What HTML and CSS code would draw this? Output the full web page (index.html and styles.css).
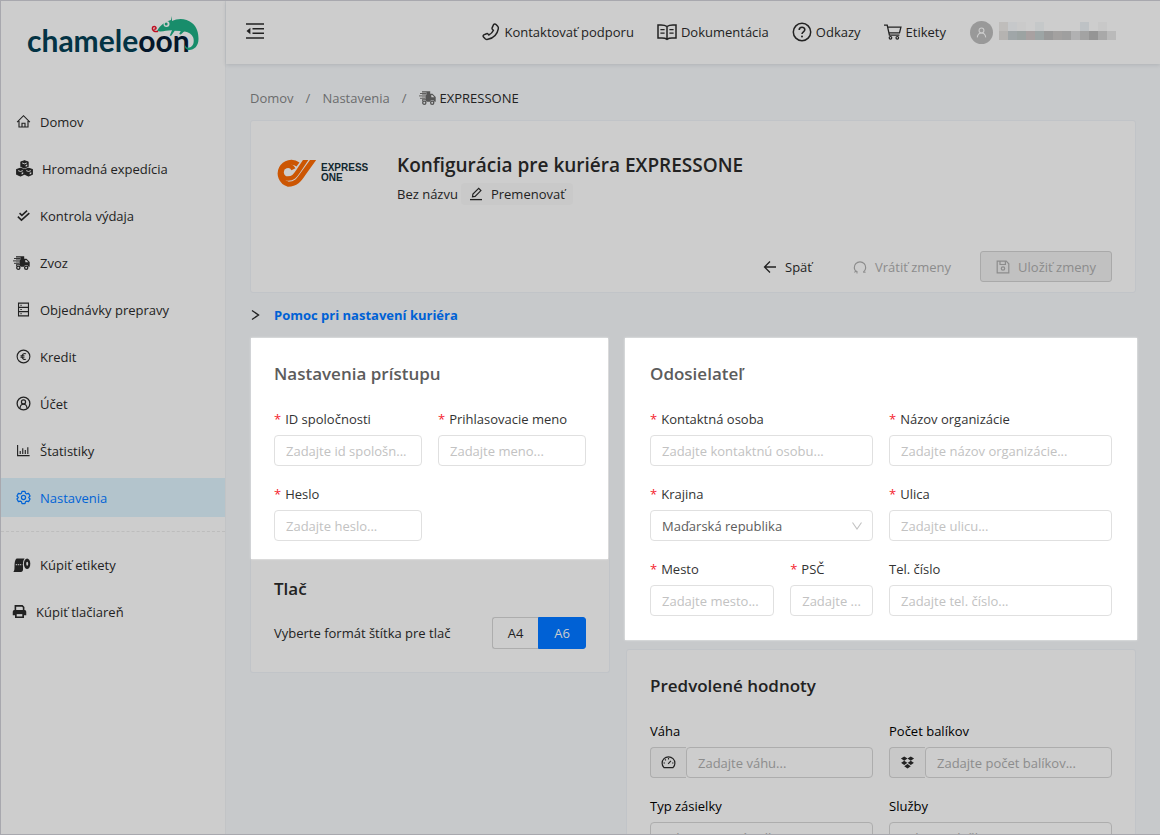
FILE: index.html
```html
<!DOCTYPE html>
<html lang="sk">
<head>
<meta charset="utf-8">
<title>Konfigurácia pre kuriéra EXPRESSONE</title>
<link rel="stylesheet" href="styles.css">
</head>
<body>
<svg class="defs" aria-hidden="true">
  <symbol id="home" viewBox="0 0 16 16"><path d="M1.2 8.6 8 1.8l6.8 6.8M3.2 7.5v6.3h9.6V7.5M6.4 13.8V9.9h3.2v3.9" fill="none" stroke="currentColor" stroke-width="1.2"/></symbol>
  <symbol id="boxes" viewBox="0 0 16 16"><path d="M8 .6l3.4 1.3v4.2L8 7.6 4.600 6.100V1.900zM4.200 7.700l3.500 1.300v4.500l-3.500 1.500L.6 13.500V9zM11.800 7.700 15.400 9v4.500L11.800 15l-3.500-1.500V9z" fill="currentColor" stroke="currentColor" stroke-linejoin="round"/><path d="M5.800 2.800 8 3.600l2.200-.8M2 10l2.200.8L6.400 10M9.600 10l2.200.8L14 10" fill="none" stroke="#cdcdcd" stroke-width=".9"/><path d="M9.100 4.800l1.500-.6v1.400l-1.500.7zM5.300 12.100l1.500-.6v1.400l-1.500.7zM12.900 12.100l1.500-.6v1.400l-1.500.7z" fill="#cdcdcd"/></symbol>
  <symbol id="checks" viewBox="0 0 16 16"><path d="M3.800 5.400l2.500 2.400L11.800 2.800M2 9.200 5.800 13l8.400-7.600" fill="none" stroke="currentColor" stroke-width="1.700"/></symbol>
  <symbol id="truck" viewBox="0 0 18 16"><path d="M3 1.200h8.200v2.600h2.300l3.200 3.300v4.700h-1.200a2.300 2.300 0 0 0-4.500 0H7.600a2.300 2.300 0 0 0-4.500 0H3z" fill="currentColor"/><path d="M1 3.500h6.600M0 5.900h6.600M1 8.300h5.600" stroke="#cdcdcd" stroke-width="1.900"/><path d="M1 3.500h6.600M0 5.900h6.600M1 8.300h5.600" stroke="currentColor" stroke-width=".9"/><path d="M12.300 4.900h.9l2.200 2.300h-3.100z" fill="#cdcdcd"/><circle cx="5.300" cy="12.700" r="1.600" fill="none" stroke="currentColor" stroke-width="1.300"/><circle cx="13.200" cy="12.700" r="1.600" fill="none" stroke="currentColor" stroke-width="1.300"/></symbol>
  <symbol id="orders" viewBox="0 0 16 16"><path d="M2.700 1.200h10.600v13.600H2.700zM2.700 5.700h10.600M2.700 10.300h10.600" fill="none" stroke="currentColor" stroke-width="1.200"/><path d="M4.600 3.500h1.600M4.600 8h1.600M4.600 12.500h1.600" stroke="currentColor"/></symbol>
  <symbol id="euro" viewBox="0 0 16 16"><circle cx="8" cy="8" r="6.800" fill="none" stroke="currentColor" stroke-width="1.200"/><path d="M10.700 5.200a3 3 0 0 0-4.300 2.800 3 3 0 0 0 4.300 2.800M4.800 7.200H9M4.800 8.900H9" fill="none" stroke="currentColor" stroke-width="1.100"/></symbol>
  <symbol id="user" viewBox="0 0 16 16"><circle cx="8" cy="8" r="6.800" fill="none" stroke="currentColor" stroke-width="1.400"/><circle cx="8" cy="6.300" r="2.200" fill="none" stroke="currentColor" stroke-width="1.300"/><path d="M4.300 12.800c.2-2.400 1.800-4 3.700-4s3.500 1.600 3.700 4" fill="none" stroke="currentColor" stroke-width="1.300"/></symbol>
  <symbol id="chart" viewBox="0 0 16 16"><path d="M1.700 2v11.400h12.800" fill="none" stroke="currentColor" stroke-width="1.200"/><path d="M4.500 8.500v3.200M7.200 5.500v6.200M9.900 7.500v4.200M12.600 4.500v7.200" stroke="currentColor" stroke-width="1.200"/></symbol>
  <symbol id="gear" viewBox="0 0 16 16"><path d="M6.400 1.500h3.200l.5 1.900 1.400.8 1.900-.6L15 6.400 13.600 7.800v.4L15 9.600l-1.600 2.800-1.900-.6-1.400.8-.5 1.900H6.400l-.5-1.900-1.400-.8-1.900.6L1 9.600 2.400 8.200v-.4L1 6.400l1.600-2.800 1.900.6 1.400-.8z" fill="none" stroke="currentColor" stroke-width="1.300" stroke-linejoin="round"/><circle cx="8" cy="8" r="2.200" fill="none" stroke="currentColor" stroke-width="1.300"/></symbol>
  <symbol id="roll" viewBox="0 0 18 16"><path d="M3.600 1.500h8c-1.300 1.300-1.600 3.500-1.600 6v5.300c0 1.200-.8 2.200-2 2.200H.3c1.200-1.200 1.200-3 1.200-5.200C1.500 6 1.800 2.800 3.600 1.500z" fill="currentColor"/><ellipse cx="14.100" cy="6.800" rx="3.200" ry="5.300" fill="currentColor"/><ellipse cx="14.200" cy="6.800" rx="1" ry="2" fill="#cdcdcd"/><path d="M2.800 7.700h6.400" stroke="#cdcdcd" stroke-width="1.200" stroke-dasharray="1 1"/></symbol>
  <symbol id="printer" viewBox="0 0 16 16"><path d="M3.600 6.500V2h7.300l1.500 1.500v3" fill="none" stroke="currentColor" stroke-width="1.700"/><path d="M2.500 6.500h11a1.700 1.700 0 0 1 1.700 1.700V12h-2.400v3H3.200v-3H.8V8.200a1.700 1.700 0 0 1 1.700-1.700z" fill="currentColor"/><path d="M5 10.800h6v2.500H5z" fill="#cdcdcd"/></symbol>
  <symbol id="fold" viewBox="0 0 18 16"><path d="M0 1h18M6.500 5.700H18M6.500 10.300H18M0 15h18" stroke="currentColor" stroke-width="1.500"/><path d="M4.400 4.800v6.400L.5 8z" fill="currentColor"/></symbol>
  <symbol id="phone" viewBox="0 0 18 18"><path d="M11.600 1.500c.7-.7 1.700-.7 2.400 0l1.700 1.700c.8.800.8 1.700.6 2.600-1 5.300-5.200 9.400-10.500 10.500-.9.200-1.800.1-2.600-.6l-1.700-1.800c-.6-.6-.5-1.500.3-2l2.700-1.200c.6-.3 1.200-.1 1.600.4l.7.9c2-1 3.800-2.800 4.700-4.700l-1-.8c-.5-.4-.6-1-.4-1.600z" fill="none" stroke="currentColor" stroke-width="1.500" stroke-linejoin="round"/></symbol>
  <symbol id="book" viewBox="0 0 20 18"><path d="M10 3.500C8.500 2.400 6.500 2 4 2H1v13h4c2 0 3.800.4 5 1.300 1.200-.9 3-1.300 5-1.300h4V2h-3c-2.500 0-4.500.4-6 1.500zM10 3.500V16" fill="none" stroke="currentColor" stroke-width="1.500"/><path d="M3.400 6.600h4.200M3.400 10.200h4.200M12.400 6.600h4.200M12.400 10.200h4.200" stroke="currentColor" stroke-width="1.200"/></symbol>
  <symbol id="help" viewBox="0 0 20 20"><circle cx="10" cy="10" r="8.700" fill="none" stroke="currentColor" stroke-width="1.500"/><path d="M7.200 8c0-3.600 5.600-3.600 5.600-.3 0 2-2.800 2.200-2.800 4.300" fill="none" stroke="currentColor" stroke-width="1.600"/><circle cx="10" cy="14.500" r="1" fill="currentColor"/></symbol>
  <symbol id="cart" viewBox="0 0 18 16"><path d="M0 1.200h3.200l2.200 10h10M3.600 3.200h13.300l-1.400 5.600H5" fill="none" stroke="currentColor" stroke-width="1.300"/><circle cx="6.500" cy="13.800" r="1.300" fill="none" stroke="currentColor" stroke-width="1.200"/><circle cx="13.300" cy="13.800" r="1.300" fill="none" stroke="currentColor" stroke-width="1.200"/></symbol>
  <symbol id="edit" viewBox="0 0 14 14"><path d="M3.500 9.800l.4-2.700L9.700 1.400l2.200 2.200-5.800 5.800z" fill="none" stroke="currentColor" stroke-width="1.200"/><path d="M1 12.600h12" stroke="currentColor" stroke-width="1.300"/></symbol>
  <symbol id="back" viewBox="0 0 14 14"><path d="M13 7H1.500M7 1.500 1.500 7 7 12.500" fill="none" stroke="currentColor" stroke-width="1.300"/></symbol>
  <symbol id="undo" viewBox="0 0 14 14"><path d="M3.500 12A5.700 5.700 0 1 1 10.500 12" fill="none" stroke="currentColor" stroke-width="1.200"/><path d="M1.200 12.200 4 11v2.500M12.600 12.200h-2.400" fill="none" stroke="currentColor"/></symbol>
  <symbol id="save" viewBox="0 0 14 14"><path d="M1.200 1.200h9l2.600 2.600v9H1.200zM4 1.500v3h5.400v-3" fill="none" stroke="currentColor" stroke-width="1.200"/><circle cx="7" cy="8.500" r="1.700" fill="none" stroke="currentColor" stroke-width="1.200"/></symbol>
  <symbol id="down" viewBox="0 0 12 12"><path d="M1.500 2.500 6 9l4.500-6.500" fill="none" stroke="currentColor" stroke-width="1.100"/></symbol>
  <symbol id="right" viewBox="0 0 10 12"><path d="M1.500 1.500 8 6l-6.500 4.500" fill="none" stroke="currentColor" stroke-width="1.400"/></symbol>
  <symbol id="gauge" viewBox="0 0 16 16"><path d="M3.200 13.500a6.800 6.800 0 1 1 9.600 0z" fill="none" stroke="currentColor" stroke-width="1.300" stroke-linejoin="round"/><path d="M7.600 9.500l3-3.200M8 3.200v1.500M4.200 4.700l1 1M2.700 8.500h1.500M11.800 8.500h1.500" stroke="currentColor" stroke-width="1.200"/></symbol>
  <symbol id="drop" viewBox="0 0 16 16"><path d="M4.500 1.500 8 3.800 4.500 6.100 1 3.800zM11.500 1.500 15 3.800l-3.500 2.300L8 3.800zM4.500 6.100 8 8.400l-3.500 2.300L1 8.400zM11.500 6.100 15 8.400l-3.500 2.300L8 8.400zM8 9.600l3.500 2.300L8 14.500l-3.500-2.600z" fill="currentColor"/></symbol>
</svg>

<div class="app">
  <aside class="sidebar">
    <a class="brand" href="#">
      <span class="brand-text">chamele<span class="brand-dark">oon</span></span>
      <svg class="brand-lizard" viewBox="0 0 48 38" aria-hidden="true">
        <path d="M6 16C9 10 14 7 20 5l1-4v5c6-3 14-3 20 2 5 4 6.500 10 6.500 16C47.500 31 43 35 38.500 35c-3.500 0-5.300-2.600-4.500-5 .6 2 2.400 3 4.500 2.500 4-1 5-6 3.700-10-1.300-3-4.500-5.500-8.500-6-2 .2-2.500 2.500-4 3l-1.500-.5 1.500-3-6-.3-3.500 5h-1.500l2.300-5.400C16 15 11 17.500 6 16z" fill="#188d6b"/>
        <circle cx="15.500" cy="9" r="3" fill="#cdcdcd"/><circle cx="15.200" cy="9" r="1.500" fill="#188d6b"/>
        <path d="M7 16.200c-3 1.200-6-.7-5.600-3.200.3-2 3.700-2 3.600.2 0 1-1.200 1.200-1.700.5" fill="none" stroke="#c00d20" stroke-width="1.500"/>
      </svg>
    </a>
    <nav class="menu">
      <a href="#"><svg><use href="#home"/></svg>Domov</a>
      <a href="#" class="large"><svg><use href="#boxes"/></svg>Hromadná expedícia</a>
      <a href="#"><svg><use href="#checks"/></svg>Kontrola výdaja</a>
      <a href="#" class="wide"><svg><use href="#truck"/></svg>Zvoz</a>
      <a href="#"><svg><use href="#orders"/></svg>Objednávky prepravy</a>
      <a href="#"><svg><use href="#euro"/></svg>Kredit</a>
      <a href="#"><svg><use href="#user"/></svg>Účet</a>
      <a href="#"><svg><use href="#chart"/></svg>Štatistiky</a>
      <a href="#" class="active"><svg><use href="#gear"/></svg>Nastavenia</a>
    </nav>
    <nav class="menu menu-extra">
      <a href="#" class="wide"><svg><use href="#roll"/></svg>Kúpiť etikety</a>
      <a href="#" class="near"><svg><use href="#printer"/></svg>Kúpiť tlačiareň</a>
    </nav>
  </aside>

  <div class="page">
    <header class="topbar">
      <button class="fold" type="button" aria-label="Menu"><svg><use href="#fold"/></svg></button>
      <nav class="toplinks">
        <a href="#"><svg class="i18"><use href="#phone"/></svg>Kontaktovať podporu</a>
        <a href="#"><svg class="i20"><use href="#book"/></svg>Dokumentácia</a>
        <a href="#"><svg class="i20"><use href="#help"/></svg>Odkazy</a>
        <a href="#"><svg class="i18"><use href="#cart"/></svg>Etikety</a>
      </nav>
      <div class="account">
        <span class="avatar"><svg viewBox="0 0 16 16"><circle cx="8" cy="5.500" r="3" fill="none" stroke="currentColor" stroke-width="1.300"/><path d="M2.800 14c.4-3.600 2.400-5.500 5.200-5.500s4.800 1.900 5.200 5.500" fill="none" stroke="currentColor" stroke-width="1.300"/></svg></span>
        <svg class="mosaic" viewBox="0 0 117 18" aria-hidden="true">
          <path d="M0 0h9v9H0z" fill="#bfbdbb"/><path d="M9 0h9v9H9z" fill="#c6c8ca"/><path d="M18 0h9v9h-9z" fill="#cacaca"/><path d="M36 0h9v9h-9z" fill="#c5c8c9"/><path d="M81 0h9v9h-9z" fill="#bec2c5"/><path d="M99 0h9v9h-9z" fill="#c8c8c8"/>
          <path d="M0 9h9v9H0z" fill="#b5b3b1"/><path d="M9 9h9v9H9z" fill="#a0a6a8"/><path d="M18 9h9v9h-9z" fill="#9ca3a2"/><path d="M27 9h9v9h-9z" fill="#a8a1a1"/><path d="M36 9h9v9h-9z" fill="#9da5a5"/><path d="M45 9h9v9h-9z" fill="#999"/><path d="M54 9h9v9h-9z" fill="#a3a1a0"/><path d="M63 9h9v9h-9z" fill="#9f9f9f"/><path d="M72 9h9v9h-9z" fill="#b1b1b2"/><path d="M81 9h9v9h-9z" fill="#a3a3a3"/><path d="M90 9h9v9h-9z" fill="#959595"/><path d="M99 9h9v9h-9z" fill="#a9a9a9"/><path d="M108 9h9v9h-9z" fill="#bababa"/>
        </svg>
      </div>
    </header>

    <main class="content">
      <nav class="crumbs">
        <a href="#">Domov</a><span>/</span><a href="#">Nastavenia</a><span>/</span>
        <b><svg><use href="#truck"/></svg>EXPRESSONE</b>
      </nav>

      <section class="card hero">
        <div class="hero-top">
          <svg class="courier" viewBox="0 0 94 30" role="img" aria-label="Express One">
            <path d="M24 6.500A11.200 11.200 0 1 0 14 26.200C22 26.200 25 22 29 16L40.500 0" fill="none" stroke="#cc5603" stroke-width="5"/>
            <path d="M19.500 11.300A6.300 6.300 0 1 0 14 20.500c5 0 7-2.500 10-7L33 0" fill="none" stroke="#cc5603" stroke-width="4.500"/>
            <path d="M26 0h20v2H26z" fill="#cdcdcd"/>
            <text x="47" y="13" class="courier-text">EXPRESS</text>
            <text x="47" y="23" class="courier-text">ONE</text>
          </svg>
          <div class="hero-title">
            <h1>Konfigurácia pre kuriéra EXPRESSONE</h1>
            <div class="rename"><span>Bez názvu</span><button type="button"><svg><use href="#edit"/></svg>Premenovať</button></div>
          </div>
        </div>
        <div class="actions">
          <button type="button" class="act"><svg><use href="#back"/></svg>Späť</button>
          <button type="button" class="act" disabled><svg><use href="#undo"/></svg>Vrátiť zmeny</button>
          <button type="button" class="act boxed" disabled><svg><use href="#save"/></svg>Uložiť zmeny</button>
        </div>
      </section>

      <button type="button" class="help"><svg><use href="#right"/></svg>Pomoc pri nastavení kuriéra</button>

      <div class="columns">
        <div class="left">
          <section class="spot access">
            <h2>Nastavenia prístupu</h2>
            <div class="fields">
              <div class="field"><label class="req" for="cid">ID spoločnosti</label><input id="cid" placeholder="Zadajte id spološn..."></div>
              <div class="field"><label class="req" for="login">Prihlasovacie meno</label><input id="login" placeholder="Zadajte meno..."></div>
              <div class="field"><label class="req" for="pass">Heslo</label><input id="pass" type="password" placeholder="Zadajte heslo..."></div>
            </div>
          </section>
          <section class="print">
            <h2>Tlač</h2>
            <div class="print-row">
              <span id="fmt">Vyberte formát štítka pre tlač</span>
              <div class="segment" role="radiogroup" aria-labelledby="fmt">
                <label><input type="radio" name="format"><span>A4</span></label>
                <label><input type="radio" name="format" checked><span>A6</span></label>
              </div>
            </div>
          </section>
        </div>

        <div class="right">
          <section class="spot sender">
            <h2>Odosielateľ</h2>
            <div class="fields">
              <div class="field"><label class="req" for="person">Kontaktná osoba</label><input id="person" placeholder="Zadajte kontaktnú osobu..."></div>
              <div class="field"><label class="req" for="org">Názov organizácie</label><input id="org" placeholder="Zadajte názov organizácie..."></div>
              <div class="field"><label class="req" for="country">Krajina</label><div class="select"><select id="country"><option>Maďarská republika</option></select><svg><use href="#down"/></svg></div></div>
              <div class="field"><label class="req" for="street">Ulica</label><input id="street" placeholder="Zadajte ulicu..."></div>
              <div class="pair">
                <div class="field"><label class="req" for="city">Mesto</label><input id="city" placeholder="Zadajte mesto..."></div>
                <div class="field"><label class="req" for="zip">PSČ</label><input id="zip" placeholder="Zadajte ..."></div>
              </div>
              <div class="field"><label for="tel">Tel. číslo</label><input id="tel" placeholder="Zadajte tel. číslo..."></div>
            </div>
          </section>

          <section class="card defaults">
            <h2>Predvolené hodnoty</h2>
            <div class="fields">
              <div class="field"><label for="weight">Váha</label><div class="addon"><span><svg><use href="#gauge"/></svg></span><input id="weight" placeholder="Zadajte váhu..."></div></div>
              <div class="field"><label for="count">Počet balíkov</label><div class="addon"><span><svg><use href="#drop"/></svg></span><input id="count" placeholder="Zadajte počet balíkov..."></div></div>
              <div class="field"><label for="type">Typ zásielky</label><div class="select"><select id="type"><option>Vyberte typ zásielky</option></select><svg><use href="#down"/></svg></div></div>
              <div class="field"><label for="services">Služby</label><div class="select"><select id="services"><option>Vyberte služby</option></select><svg><use href="#down"/></svg></div></div>
            </div>
          </section>
        </div>
      </div>
    </main>
  </div>
</div>
</body>
</html>
```

FILE: styles.css
```css
* { box-sizing: border-box; }
body {
  margin: 0;
  font: 13px/22px "Open Sans", "Noto Sans", sans-serif;
  color: #222;
  background: #c7c9cb;
}
a { color: inherit; text-decoration: none; }
button, input, select { font: inherit; color: inherit; }
button { border: 0; background: none; padding: 0; }
h1, h2 { margin: 0; font-weight: 600; }
.defs { position: absolute; width: 0; height: 0; }

.app {
  display: flex;
  height: 100vh;
  overflow: hidden;
  border: 1px solid #a8a8ae;
  border-right-width: 0;
}

/* Sidebar */
.sidebar {
  flex: none;
  width: 225px;
  background: #cdcdcd;
  border-right: 1px solid #c2c4c6;
}
.brand { display: block; position: relative; height: 101px; padding: 18px 0 0 26px; }
.brand-text { font: 700 30px/42px Lato, sans-serif; color: #033344; }
.brand-dark { color: #04162a; }
.brand-lizard { position: absolute; left: 150px; top: 14px; width: 48px; height: 38px; }
.menu { display: flex; flex-direction: column; gap: 8px; }
.menu a { display: flex; align-items: center; gap: 9px; height: 39px; padding-left: 15px; }
.menu svg { width: 15px; height: 15px; }
.menu .large svg { width: 17px; height: 17px; }
.menu .wide { padding-left: 12px; }
.menu .wide svg { width: 18px; height: 16px; }
.menu .near { padding-left: 11px; }
.menu .active { background: #b3c4cc; color: #0063d6; }
.menu-extra { margin-top: 14px; padding-top: 13px; border-top: 1px dashed #bdbdbd; }

/* Top bar */
.page { flex: 1; min-width: 0; }
.topbar {
  position: relative;
  display: flex;
  align-items: center;
  height: 63px;
  padding: 0 44px 1px 20px;
  background: #cdcdcd;
  box-shadow: 0 1px 4px rgba(0, 21, 41, .12);
}
.fold svg { display: block; width: 18px; height: 16px; margin-bottom: 3px; }
.toplinks { display: flex; gap: 23px; margin-left: auto; }
.toplinks a { display: flex; align-items: center; gap: 4px; }
.i18 { width: 18px; height: 18px; }
.i20 { width: 20px; height: 20px; }
.account { display: flex; align-items: center; gap: 6px; margin-left: 24px; }
.avatar {
  display: flex;
  align-items: center;
  justify-content: center;
  width: 23px;
  height: 23px;
  border-radius: 50%;
  background: #999;
  color: #cdcdcd;
}
.avatar svg { width: 13px; height: 13px; }
.mosaic { width: 117px; height: 18px; margin-bottom: 3px; }

/* Content */
.content { padding: 23px 24px 0; }
.crumbs { display: flex; align-items: center; gap: 12px; color: #6b6c6d; }
.crumbs b { display: flex; align-items: center; gap: 3px; font-weight: 400; color: #222; }
.crumbs svg { width: 18px; height: 16px; color: #555; }
.card { background: #cdcdcd; border: 1px solid #c1c4c8; border-radius: 3px; }
.hero { margin-top: 11px; padding: 30px 23px 10px; }
.hero-top { display: flex; gap: 29px; min-height: 100px; }
.courier { width: 94px; height: 30px; margin-top: 7px; }
.courier-text { font: 700 10px "Liberation Sans", Arial, sans-serif; fill: #10262d; }
.hero h1 { font-size: 19px; line-height: 28px; }
.rename { display: flex; align-items: center; gap: 3px; margin-top: 4px; }
.rename button { display: flex; align-items: center; gap: 8px; padding: 0 8px; border-radius: 4px; background: #c9c9c9; }
.rename svg { width: 14px; height: 14px; }
.actions { display: flex; justify-content: flex-end; gap: 14px; }
.act { display: flex; align-items: center; gap: 8px; height: 31px; padding: 0 15px 0 12px; }
.act svg { width: 14px; height: 14px; }
.act:disabled { color: #8c8c8c; }
.boxed { padding: 0 15px; border: 1px solid #a9a9a9; border-radius: 3px; background: #c1c1c1; }
.help { display: flex; align-items: center; gap: 13px; margin-top: 11px; font-weight: 700; color: #0061d5; }
.help svg { width: 11px; height: 12px; color: #222; }

.columns { display: grid; grid-template-columns: 12fr 17fr; align-items: start; gap: 16px; margin-top: 12px; }
.left { border: 1px solid #c1c4c8; border-top: 0; border-radius: 3px; background: #cdcdcd; }
.spot { background: #fff; box-shadow: 0 0 2px rgba(255, 255, 255, .8); color: #333; }
.spot h2 { color: #5c5c5c; }
h2 { font-size: 17px; line-height: 24px; }
.access { margin-right: 1px; padding: 24px 22px 18px 23px; }
.print { padding: 18px 23px 23px; }
.print-row { display: flex; align-items: center; justify-content: space-between; margin-top: 16px; }
.segment { display: flex; }
.segment label { position: relative; }
.segment input { position: absolute; inset: 0; margin: 0; opacity: 0; }
.segment span { display: block; padding: 4px 15px; line-height: 22px; border: 1px solid #adadad; border-right: 0; border-radius: 3px 0 0 3px; }
.segment input:checked + span { border: 1px solid #0061d5; border-radius: 0 3px 3px 0; background: #0061d5; color: #cdcdcd; }

.fields { display: grid; grid-template-columns: 1fr 1fr; gap: 17px 16px; margin-top: 22px; }
.pair { display: grid; grid-template-columns: 3fr 2fr; gap: 16px; }
.field { display: flex; flex-direction: column; gap: 5px; min-width: 0; }
.field label { white-space: nowrap; }
.req::before { content: "*"; margin-right: 4px; color: #f5222d; }
input, select {
  width: 100%;
  min-width: 0;
  height: 31px;
  padding: 0 11px;
  border: 1px solid #e0e0e0;
  border-radius: 4px;
  background: transparent;
  outline: 0;
}
input::placeholder { color: #c2c2c2; opacity: 1; }
.select { position: relative; }
select { display: block; appearance: none; color: #5c5c5c; }
.select svg { position: absolute; right: 10px; top: 10px; width: 12px; height: 12px; color: #c2c2c2; pointer-events: none; }
.sender { margin: 0 -1px; padding: 24px 25px; }
.defaults { margin-top: 9px; padding: 24px 23px; }
.defaults label { color: #000; }
.defaults input, .defaults select { border-color: #adadad; }
.defaults input::placeholder { color: #8c8c8c; }
.defaults select, .defaults .select svg { color: #8c8c8c; }
.addon { display: flex; }
.addon span {
  display: flex;
  align-items: center;
  justify-content: center;
  flex: none;
  width: 36px;
  border: 1px solid #adadad;
  border-right: 0;
  border-radius: 4px 0 0 4px;
  background: #c8c8c8;
}
.addon svg { width: 15px; height: 15px; }
```
